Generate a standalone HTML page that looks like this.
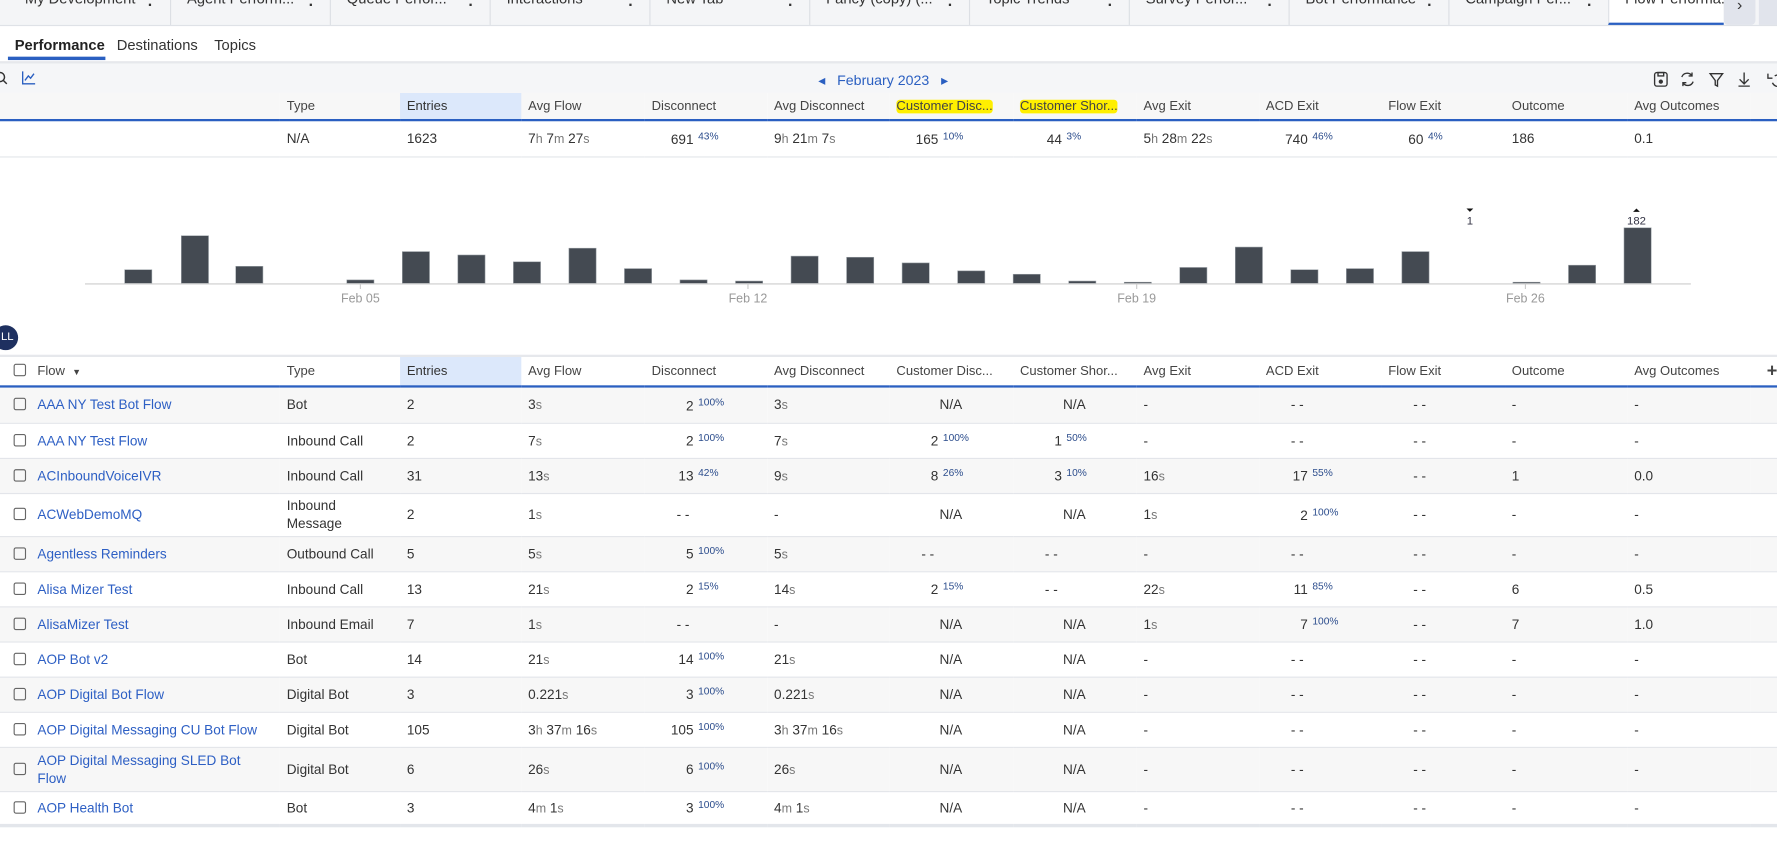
<!DOCTYPE html>
<html><head><meta charset="utf-8"><style>
*{box-sizing:border-box;margin:0;padding:0}
html,body{width:1777px;height:846px;overflow:hidden;background:#fff}
#w{width:1568px;height:747px;transform:scale(1.13329);transform-origin:0 0;position:relative;font-family:"Liberation Sans",Arial,sans-serif;color:#333;font-size:12px}
.abs{position:absolute}
.tabs{left:0;top:0;width:1568px;height:23px;background:#f4f5f7;border-bottom:1px solid #dfe2e7}
.tab{position:absolute;top:0;height:22px;width:141px;border-left:1px solid #dcdfe4;overflow:hidden}
.tab span{position:absolute;left:14px;top:-9px;font-size:13px;color:#333;white-space:nowrap}
.tab b{position:absolute;right:14px;top:-4px;font-size:14px}
.sub span{position:absolute;top:32px;font-size:13px;color:#333}
.toolbar{left:0;top:54px;width:1568px;height:28px;background:#f5f6f8;border-top:2px solid #e6e8ec}
table{border-collapse:collapse;table-layout:fixed;position:absolute;left:0;width:1568px}
td,th{padding:0 0 0 6px;font-weight:normal;text-align:left;white-space:nowrap;overflow:hidden;font-size:12px}
th{color:#444;height:24px;font-size:11.5px}
.num{display:inline-block;width:37px;text-align:right;padding-right:0}
.p{font-size:9px;color:#2b4c8c;vertical-align:4px;margin-left:4px}
i{font-style:normal;font-size:11px;color:#777}
.na{padding-left:44px}
.dd{padding-left:28px}
tbody tr{border-bottom:1px solid #e3e5ea}
tbody tr:nth-child(odd){background:#f7f7f7}
a{color:#2d5fc4;text-decoration:none}
.cb{display:inline-block;width:11px;height:11px;border:1px solid #666;border-radius:2px;vertical-align:-1px}
.hl{background:#ffef00;border-radius:3px}
</style></head><body><div id="w">
<div class="abs tabs">
<div class="tab" style="left:8px;border-left:0"><span>My Development</span><b>·</b></div>
<div class="tab" style="left:150px"><span>Agent Perform...</span><b>·</b></div>
<div class="tab" style="left:291px"><span>Queue Perfor...</span><b>·</b></div>
<div class="tab" style="left:432px"><span>Interactions</span><b>·</b></div>
<div class="tab" style="left:573px"><span>New Tab</span><b>·</b></div>
<div class="tab" style="left:714px"><span>Fancy (copy) (...</span><b>·</b></div>
<div class="tab" style="left:855px"><span>Topic Trends</span><b>·</b></div>
<div class="tab" style="left:996px"><span>Survey Perfor...</span><b>·</b></div>
<div class="tab" style="left:1137px"><span>Bot Performance</span><b>·</b></div>
<div class="tab" style="left:1278px"><span>Campaign Per...</span><b>·</b></div>
<div class="tab" style="left:1419px;width:102px;background:#fff;border-bottom:2px solid #2a5fc1"><span>Flow Performa...</span></div>
<div class="abs" style="left:1521px;top:0;width:28px;height:22px;background:#e1e4ec;border-radius:0 0 4px 4px;text-align:center;font-size:14px;line-height:8px;color:#333">›</div>
<div class="abs" style="left:1552px;top:0;width:16px;height:22px;background:#e1e4ec"></div>
</div>
<div class="sub">
<span style="left:13px;font-weight:bold;color:#222">Performance</span>
<span style="left:103px">Destinations</span>
<span style="left:189px">Topics</span>
</div>
<div class="abs" style="left:7px;top:50px;width:86px;height:3px;background:#2a5fc1"></div>
<div class="abs toolbar">
<svg class="abs" style="left:-4px;top:7px" width="12" height="12"><circle cx="4" cy="5" r="4" fill="none" stroke="#333" stroke-width="1.3"/><line x1="7" y1="8" x2="10" y2="11" stroke="#333" stroke-width="1.3"/></svg>
<svg class="abs" style="left:19px;top:6px" width="13" height="13"><path d="M1 1V12H12" fill="none" stroke="#2a5fc1" stroke-width="1.2"/><path d="M3 9L6 5L8 7L11 3" fill="none" stroke="#2a5fc1" stroke-width="1.2"/></svg>
<div class="abs" style="left:722px;top:7px;color:#2a5fc1;font-size:12.5px">◂&nbsp;&nbsp; February 2023 &nbsp;&nbsp;▸</div>
<svg class="abs" style="left:1458px;top:6px" width="110" height="16" fill="none" stroke="#333" stroke-width="1.2">
<rect x="2" y="2" width="11" height="12" rx="2"/><rect x="5" y="2" width="5" height="3"/><circle cx="7.5" cy="10" r="1.3" fill="#333"/>
<path d="M26 6a5 5 0 0 1 9-1M35 2v3h-3M36 10a5 5 0 0 1-9 1M27 14v-3h3"/>
<path d="M51 3h11l-4.5 6v5l-2-1V9z"/>
<path d="M81 2v9M77 8l4 4 4-4M76 14h10"/>
<path d="M108 5a5 5 0 1 1 -2 6M102 3v4h4"/>
</svg>
</div>
<table style="top:82px">
<colgroup><col style="width:247px"><col style="width:106px"><col style="width:107px"><col style="width:109px"><col style="width:108px"><col style="width:108px"><col style="width:109px"><col style="width:109px"><col style="width:108px"><col style="width:108px"><col style="width:109px"><col style="width:108px"><col style="width:109px"><col style="width:23px"></colgroup>
<tr style="border-bottom:2px solid #2a5fc1"><th></th><th>Type</th><th style="background:#dce8fb;color:#333">Entries</th><th>Avg Flow</th><th>Disconnect</th><th>Avg Disconnect</th><th><span class="hl">Customer Disc...</span></th><th><span class="hl">Customer Shor...</span></th><th>Avg Exit</th><th>ACD Exit</th><th>Flow Exit</th><th>Outcome</th><th>Avg Outcomes</th><th></th></tr>
<tr style="height:32px;border-bottom:1px solid #e3e5ea"><td></td><td>N/A</td><td>1623</td><td>7<i>h</i> 7<i>m</i> 27<i>s</i></td><td><span class="num">691</span><span class="p">43%</span></td><td>9<i>h</i> 21<i>m</i> 7<i>s</i></td><td><span class="num">165</span><span class="p">10%</span></td><td><span class="num">44</span><span class="p">3%</span></td><td>5<i>h</i> 28<i>m</i> 22<i>s</i></td><td><span class="num">740</span><span class="p">46%</span></td><td><span class="num" style="width:31px">60</span><span class="p">4%</span></td><td>186</td><td>0.1</td><td></td></tr>
</table>
<svg class="abs" style="left:0;top:140px" width="1568" height="150">
<g fill="#444a52" stroke="#9aa0a6" stroke-width="0.5">
<rect x="110" y="98" width="24" height="12"/><rect x="160" y="68" width="24" height="42"/><rect x="208" y="95" width="24" height="15"/><rect x="306" y="107" width="24" height="3"/><rect x="355" y="82" width="24" height="28"/><rect x="404" y="85" width="24" height="25"/><rect x="453" y="91" width="24" height="19"/><rect x="502" y="79" width="24" height="31"/><rect x="551" y="97" width="24" height="13"/><rect x="600" y="107" width="24" height="3"/><rect x="649" y="108" width="24" height="2"/><rect x="698" y="86" width="24" height="24"/><rect x="747" y="87" width="24" height="23"/><rect x="796" y="92" width="24" height="18"/><rect x="845" y="99" width="24" height="11"/><rect x="894" y="102" width="24" height="8"/><rect x="943" y="108" width="24" height="2"/><rect x="992" y="109" width="24" height="1"/><rect x="1041" y="96" width="24" height="14"/><rect x="1090" y="78" width="24" height="32"/><rect x="1139" y="98" width="24" height="12"/><rect x="1188" y="97" width="24" height="13"/><rect x="1237" y="82" width="24" height="28"/><rect x="1335" y="109" width="24" height="1"/><rect x="1384" y="94" width="24" height="16"/><rect x="1433" y="61" width="24" height="49"/>
</g>
<line x1="75" y1="110.5" x2="1492" y2="110.5" stroke="#ccc"/>
<g stroke="#ccc"><line x1="318" y1="110" x2="318" y2="115"/><line x1="660" y1="110" x2="660" y2="115"/><line x1="1003" y1="110" x2="1003" y2="115"/><line x1="1346" y1="110" x2="1346" y2="115"/></g>
<g fill="#999" font-size="11" text-anchor="middle" font-family="Liberation Sans,sans-serif"><text x="318" y="127">Feb 05</text><text x="660" y="127">Feb 12</text><text x="1003" y="127">Feb 19</text><text x="1346" y="127">Feb 26</text></g>
<path d="M1294 44h6l-3 3z" fill="#111"/><text x="1297" y="58" font-size="10" text-anchor="middle" fill="#334">1</text>
<path d="M1441 47h6l-3-3z" fill="#111"/><text x="1444" y="58" font-size="10" text-anchor="middle" fill="#334">182</text>
</svg>
<div class="abs" style="left:-6px;top:287px;width:22px;height:22px;border-radius:50%;background:#1e3060;color:#fff;font-size:10px;line-height:22px;text-align:right;padding-right:4px">LL</div>
<div class="abs" style="left:0;top:313px;width:1568px;height:2px;background:#e6e8ec"></div>
<table style="top:315px">
<colgroup><col style="width:30px"><col style="width:217px"><col style="width:106px"><col style="width:107px"><col style="width:109px"><col style="width:108px"><col style="width:108px"><col style="width:109px"><col style="width:109px"><col style="width:108px"><col style="width:108px"><col style="width:109px"><col style="width:108px"><col style="width:109px"><col style="width:23px"></colgroup>
<thead><tr style="border-bottom:2px solid #2a5fc1;height:26px"><th style="padding-left:12px"><span class="cb"></span></th><th style="padding-left:3px">Flow &nbsp;<span style="font-size:8px">▼</span></th><th>Type</th><th style="background:#dce8fb;color:#333">Entries</th><th>Avg Flow</th><th>Disconnect</th><th>Avg Disconnect</th><th>Customer Disc...</th><th>Customer Shor...</th><th>Avg Exit</th><th>ACD Exit</th><th>Flow Exit</th><th>Outcome</th><th>Avg Outcomes</th><th style="font-size:16px;font-weight:bold;padding-left:14px">+</th></tr></thead>
<tbody>
<tr style="height:32px"><td style="padding-left:12px"><span class="cb"></span></td><td style="padding-left:3px"><a>AAA NY Test Bot Flow</a></td><td>Bot</td><td>2</td><td>3<i>s</i></td><td><span class="num">2</span><span class="p">100%</span></td><td>3<i>s</i></td><td class="na">N/A</td><td class="na">N/A</td><td>-</td><td class="dd">- -</td><td class="dd">- -</td><td>-</td><td>-</td><td></td></tr>
<tr style="height:31px"><td style="padding-left:12px"><span class="cb"></span></td><td style="padding-left:3px"><a>AAA NY Test Flow</a></td><td>Inbound Call</td><td>2</td><td>7<i>s</i></td><td><span class="num">2</span><span class="p">100%</span></td><td>7<i>s</i></td><td><span class="num">2</span><span class="p">100%</span></td><td><span class="num">1</span><span class="p">50%</span></td><td>-</td><td class="dd">- -</td><td class="dd">- -</td><td>-</td><td>-</td><td></td></tr>
<tr style="height:31px"><td style="padding-left:12px"><span class="cb"></span></td><td style="padding-left:3px"><a>ACInboundVoiceIVR</a></td><td>Inbound Call</td><td>31</td><td>13<i>s</i></td><td><span class="num">13</span><span class="p">42%</span></td><td>9<i>s</i></td><td><span class="num">8</span><span class="p">26%</span></td><td><span class="num">3</span><span class="p">10%</span></td><td>16<i>s</i></td><td><span class="num">17</span><span class="p">55%</span></td><td class="dd">- -</td><td>1</td><td>0.0</td><td></td></tr>
<tr style="height:38px"><td style="padding-left:12px"><span class="cb"></span></td><td style="padding-left:3px"><a>ACWebDemoMQ</a></td><td style="line-height:16px">Inbound<br>Message</td><td>2</td><td>1<i>s</i></td><td class="dd">- -</td><td>-</td><td class="na">N/A</td><td class="na">N/A</td><td>1<i>s</i></td><td><span class="num">2</span><span class="p">100%</span></td><td class="dd">- -</td><td>-</td><td>-</td><td></td></tr>
<tr style="height:31px"><td style="padding-left:12px"><span class="cb"></span></td><td style="padding-left:3px"><a>Agentless Reminders</a></td><td>Outbound Call</td><td>5</td><td>5<i>s</i></td><td><span class="num">5</span><span class="p">100%</span></td><td>5<i>s</i></td><td class="dd">- -</td><td class="dd">- -</td><td>-</td><td class="dd">- -</td><td class="dd">- -</td><td>-</td><td>-</td><td></td></tr>
<tr style="height:31px"><td style="padding-left:12px"><span class="cb"></span></td><td style="padding-left:3px"><a>Alisa Mizer Test</a></td><td>Inbound Call</td><td>13</td><td>21<i>s</i></td><td><span class="num">2</span><span class="p">15%</span></td><td>14<i>s</i></td><td><span class="num">2</span><span class="p">15%</span></td><td class="dd">- -</td><td>22<i>s</i></td><td><span class="num">11</span><span class="p">85%</span></td><td class="dd">- -</td><td>6</td><td>0.5</td><td></td></tr>
<tr style="height:31px"><td style="padding-left:12px"><span class="cb"></span></td><td style="padding-left:3px"><a>AlisaMizer Test</a></td><td>Inbound Email</td><td>7</td><td>1<i>s</i></td><td class="dd">- -</td><td>-</td><td class="na">N/A</td><td class="na">N/A</td><td>1<i>s</i></td><td><span class="num">7</span><span class="p">100%</span></td><td class="dd">- -</td><td>7</td><td>1.0</td><td></td></tr>
<tr style="height:31px"><td style="padding-left:12px"><span class="cb"></span></td><td style="padding-left:3px"><a>AOP Bot v2</a></td><td>Bot</td><td>14</td><td>21<i>s</i></td><td><span class="num">14</span><span class="p">100%</span></td><td>21<i>s</i></td><td class="na">N/A</td><td class="na">N/A</td><td>-</td><td class="dd">- -</td><td class="dd">- -</td><td>-</td><td>-</td><td></td></tr>
<tr style="height:31px"><td style="padding-left:12px"><span class="cb"></span></td><td style="padding-left:3px"><a>AOP Digital Bot Flow</a></td><td>Digital Bot</td><td>3</td><td>0.221<i>s</i></td><td><span class="num">3</span><span class="p">100%</span></td><td>0.221<i>s</i></td><td class="na">N/A</td><td class="na">N/A</td><td>-</td><td class="dd">- -</td><td class="dd">- -</td><td>-</td><td>-</td><td></td></tr>
<tr style="height:31px"><td style="padding-left:12px"><span class="cb"></span></td><td style="padding-left:3px"><a>AOP Digital Messaging CU Bot Flow</a></td><td>Digital Bot</td><td>105</td><td>3<i>h</i> 37<i>m</i> 16<i>s</i></td><td><span class="num">105</span><span class="p">100%</span></td><td>3<i>h</i> 37<i>m</i> 16<i>s</i></td><td class="na">N/A</td><td class="na">N/A</td><td>-</td><td class="dd">- -</td><td class="dd">- -</td><td>-</td><td>-</td><td></td></tr>
<tr style="height:39px"><td style="padding-left:12px"><span class="cb"></span></td><td style="padding-left:3px;line-height:16px"><a>AOP Digital Messaging SLED Bot<br>Flow</a></td><td>Digital Bot</td><td>6</td><td>26<i>s</i></td><td><span class="num">6</span><span class="p">100%</span></td><td>26<i>s</i></td><td class="na">N/A</td><td class="na">N/A</td><td>-</td><td class="dd">- -</td><td class="dd">- -</td><td>-</td><td>-</td><td></td></tr>
<tr style="height:30px;background:#fff;border-bottom:3px solid #e3e6eb"><td style="padding-left:12px"><span class="cb"></span></td><td style="padding-left:3px"><a>AOP Health Bot</a></td><td>Bot</td><td>3</td><td>4<i>m</i> 1<i>s</i></td><td><span class="num">3</span><span class="p">100%</span></td><td>4<i>m</i> 1<i>s</i></td><td class="na">N/A</td><td class="na">N/A</td><td>-</td><td class="dd">- -</td><td class="dd">- -</td><td>-</td><td>-</td><td></td></tr>
</tbody></table>
</div></body></html>
